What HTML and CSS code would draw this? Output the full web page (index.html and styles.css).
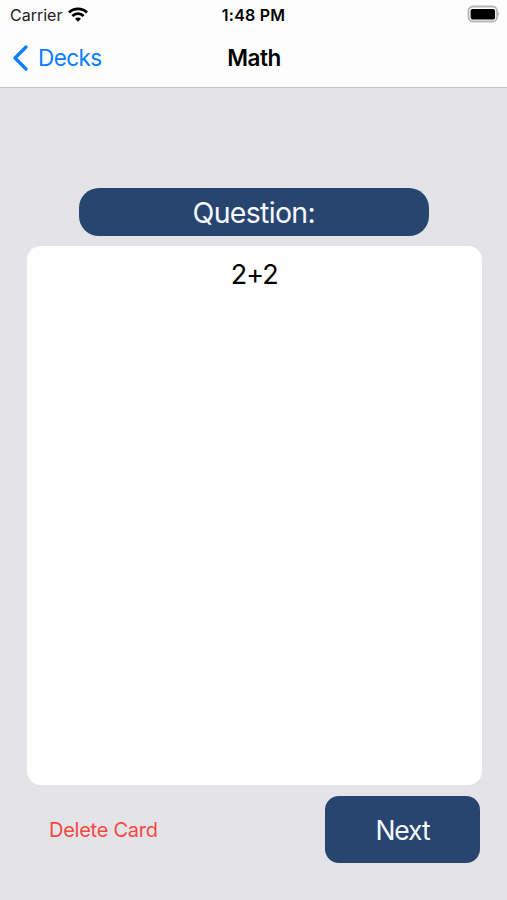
FILE: index.html
```html
<!DOCTYPE html>
<html lang="en">
<head>
<meta charset="utf-8">
<title>Math</title>
<link rel="stylesheet" href="styles.css">
</head>
<body>
<header class="header">
  <div class="status">
    <div class="network"><span class="carrier">Carrier</span>
      <svg class="wifi" width="20" height="15" viewBox="0 0 20 15"><g fill="none" stroke="#000" stroke-width="2.800"><path d="M1 5.500C6 .6 14 .6 19 5.500"/><path d="M4.400 9C7.500 5.800 12.500 5.800 15.600 9"/></g><path d="M7 11.700Q10 9.200 13 11.700L10 14.700Z"/></svg>
    </div>
    <span class="time">1:48 PM</span>
    <svg class="battery" width="33" height="18" viewBox="0 0 33 18"><rect x="1.500" y="1.500" width="28.600" height="15" rx="4.500" fill="#fff" stroke="#b5b5b5" stroke-width="1.800"/><rect x="3.600" y="4" width="24.500" height="10.500" rx="2" fill="#000"/><path d="M31.300 6.800Q33.200 9 31.300 11.200Z" fill="#aaa"/></svg>
  </div>
  <nav class="nav">
    <a class="back"><svg class="chevron" width="17" height="26" viewBox="0 0 17 26"><path d="M14 2L3 13L14 24" fill="none" stroke="#087eff" stroke-width="3.200" stroke-linecap="round" stroke-linejoin="round"/></svg><span class="back-label">Decks</span></a>
    <h1 class="title">Math</h1>
  </nav>
</header>
<main class="content">
  <div class="prompt"><span>Question:</span></div>
  <section class="card"><span>2+2</span></section>
  <div class="actions">
    <button class="delete">Delete Card</button>
    <button class="next">Next</button>
  </div>
</main>
</body>
</html>
```
FILE: styles.css
```css
* { box-sizing: border-box; }
body { margin: 0; height: 900px; background: #e4e3e8; font-family: Inter, sans-serif; color: #000; }
button { border: 0; padding: 0; font-family: inherit; }
.header { height: 88px; background: #fdfdfd; border-bottom: 1px solid #c5c5c8; }
.status { height: 30px; display: grid; grid-template-columns: 1fr auto 1fr; align-items: center; padding: 0 7px 0 10px; }
.network { display: flex; align-items: center; gap: 6px; }
.carrier { font-size: 16px; color: #222; }
.wifi { margin-top: -2px; }
.time { font-size: 16px; font-weight: 600; letter-spacing: 0.2px; margin-left: -3px; }
.battery { justify-self: end; margin-top: -2px; }
.nav { height: 55px; display: grid; grid-template-columns: 1fr auto 1fr; align-items: center; padding: 0 12px; }
.back { display: flex; align-items: center; gap: 9px; color: #087eff; font-size: 22.5px; letter-spacing: -0.6px; }
.title { margin: 0 0 0 1px; font-size: 22.5px; font-weight: 600; letter-spacing: -0.5px; }
.content { display: flex; flex-direction: column; padding: 100px 25px 0 26.5px; }
.prompt { width: 349.5px; height: 48px; margin-left: 52.5px; border-radius: 20px; background: #28456f; color: #f5f9ff; display: flex; align-items: center; justify-content: center; font-size: 28.5px; letter-spacing: -0.7px; padding-top: 1px; }
.card { height: 539px; margin-top: 10px; border-radius: 14px; background: #fff; padding-top: 11px; text-align: center; font-size: 27px; line-height: 36px; letter-spacing: -0.9px; }
.actions { display: flex; align-items: center; justify-content: space-between; margin-top: 11px; padding: 0 2px 0 22.5px; }
.delete { background: none; color: #f4473f; font-size: 20px; letter-spacing: -0.25px; padding-top: 1px; }
.next { width: 155px; height: 67px; border-radius: 14px; background: #28456f; color: #f5f9ff; font-size: 26.5px; letter-spacing: -1.1px; }
```
